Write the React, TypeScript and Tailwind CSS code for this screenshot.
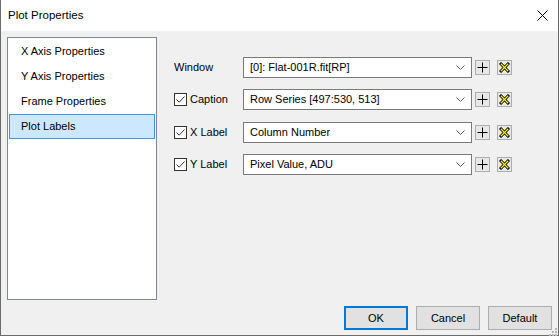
import React from 'react';

const font = { fontFamily: '"Segoe UI", "Liberation Sans", Arial, sans-serif' };

const navItems = ['X Axis Properties', 'Y Axis Properties', 'Frame Properties', 'Plot Labels'];

const rows = [
  { label: 'Window', value: '[0]: Flat-001R.fit[RP]', check: false, mt: 'mt-0' },
  { label: 'Caption', value: 'Row Series [497:530, 513]', check: true, mt: 'mt-[11px]' },
  { label: 'X Label', value: 'Column Number', check: true, mt: 'mt-[12px]' },
  { label: 'Y Label', value: 'Pixel Value, ADU', check: true, mt: 'mt-[11px]' },
];

const CheckBox = () => (
  <div className="w-[13px] h-[13px] border border-[#333] bg-white flex items-center justify-center">
    <svg width="11" height="11" viewBox="0 0 11 11">
      <path d="M1.5 5.5 L4.2 8.2 L9.5 2.5" fill="none" stroke="#333" strokeWidth="1" />
    </svg>
  </div>
);

const Chevron = () => (
  <svg width="9" height="5" viewBox="0 0 9 5">
    <path d="M0.5 0.5 L4.5 4.5 L8.5 0.5" fill="none" stroke="#606060" strokeWidth="1" />
  </svg>
);

const PlusBtn = () => (
  <div className="w-[15px] h-[15px] border border-[#adadad] bg-[#e8e8e8] flex items-center justify-center">
    <svg width="11" height="11" viewBox="0 0 11 11">
      <path d="M5.5 0.5 V10.5 M0.5 5.5 H10.5" stroke="#000" strokeWidth="1" />
    </svg>
  </div>
);

const DeleteBtn = () => (
  <div className="w-[15px] h-[15px] border border-[#adadad] bg-[#e8e8e8] flex items-center justify-center">
    <svg width="11" height="11" viewBox="0 0 11 11">
      <path d="M1 1 L10 10 M10 1 L1 10" stroke="#000" strokeWidth="3" />
      <path d="M1.8 1.8 L9.2 9.2 M9.2 1.8 L1.8 9.2" stroke="#f0f000" strokeWidth="1.3" />
    </svg>
  </div>
);

export default function App() {
  return (
    <div
      className="w-[559px] h-[336px] flex flex-col border-l border-r border-b border-[#6b6b6b] bg-[#f0f0f0] text-[11px] text-black"
      style={font}
    >
      {/* Title bar */}
      <div className="h-[31px] bg-white flex items-center justify-between pl-[7px] pr-[9px]">
        <span className="text-[11.5px]">Plot Properties</span>
        <svg width="11" height="11" viewBox="0 0 11 11" className="mr-[1px]">
          <path d="M0.5 0.5 L10.5 10.5 M10.5 0.5 L0.5 10.5" stroke="#000" strokeWidth="1" />
        </svg>
      </div>

      {/* Body */}
      <div className="flex-1 flex flex-col">
        <div className="flex pt-[6px] pl-[6px]">
          {/* Category list */}
          <div className="w-[150px] h-[263px] bg-white border border-[#828790] pt-[1px]">
            {navItems.map((item) => {
              const selected = item === 'Plot Labels';
              return (
                <div
                  key={item}
                  className={`h-[25px] mx-[1px] flex items-center pl-[11px] border ${
                    selected ? 'bg-[#cce8ff] border-[#3d95e6]' : 'border-transparent'
                  }`}
                >
                  {item}
                </div>
              );
            })}
          </div>

          {/* Label settings */}
          <div className="flex flex-col pt-[20px] pl-[17px]">
            {rows.map((row) => (
              <div key={row.label} className={`flex items-center h-[21px] ${row.mt}`}>
                <div className="w-[69px] flex items-center gap-[3px]">
                  {row.check && <CheckBox />}
                  <span>{row.label}</span>
                </div>
                <div className="w-[229px] h-[21px] bg-white border border-[#7a7a7a] flex items-center justify-between pl-[6px] pr-[6px]">
                  <span>{row.value}</span>
                  <Chevron />
                </div>
                <div className="ml-[3px]">
                  <PlusBtn />
                </div>
                <div className="ml-[7px]">
                  <DeleteBtn />
                </div>
              </div>
            ))}
          </div>
        </div>

        {/* Footer buttons */}
        <div className="flex justify-end gap-[8px] pr-[6px] mt-[6px] relative">
          <button className="w-[64px] h-[24px] bg-[#e1e1e1] border-2 border-[#0078d7]">OK</button>
          <button className="w-[64px] h-[24px] bg-[#e1e1e1] border border-[#adadad]">Cancel</button>
          <button className="w-[64px] h-[24px] bg-[#e1e1e1] border border-[#adadad]">Default</button>
          <svg width="8" height="8" viewBox="0 0 8 8" className="absolute right-[1px] top-[22px]">
            <g fill="#b8b8b8">
              <rect x="6" y="0" width="2" height="2" />
              <rect x="3" y="3" width="2" height="2" />
              <rect x="6" y="3" width="2" height="2" />
              <rect x="0" y="6" width="2" height="2" />
              <rect x="3" y="6" width="2" height="2" />
              <rect x="6" y="6" width="2" height="2" />
            </g>
          </svg>
        </div>
      </div>
    </div>
  );
}
